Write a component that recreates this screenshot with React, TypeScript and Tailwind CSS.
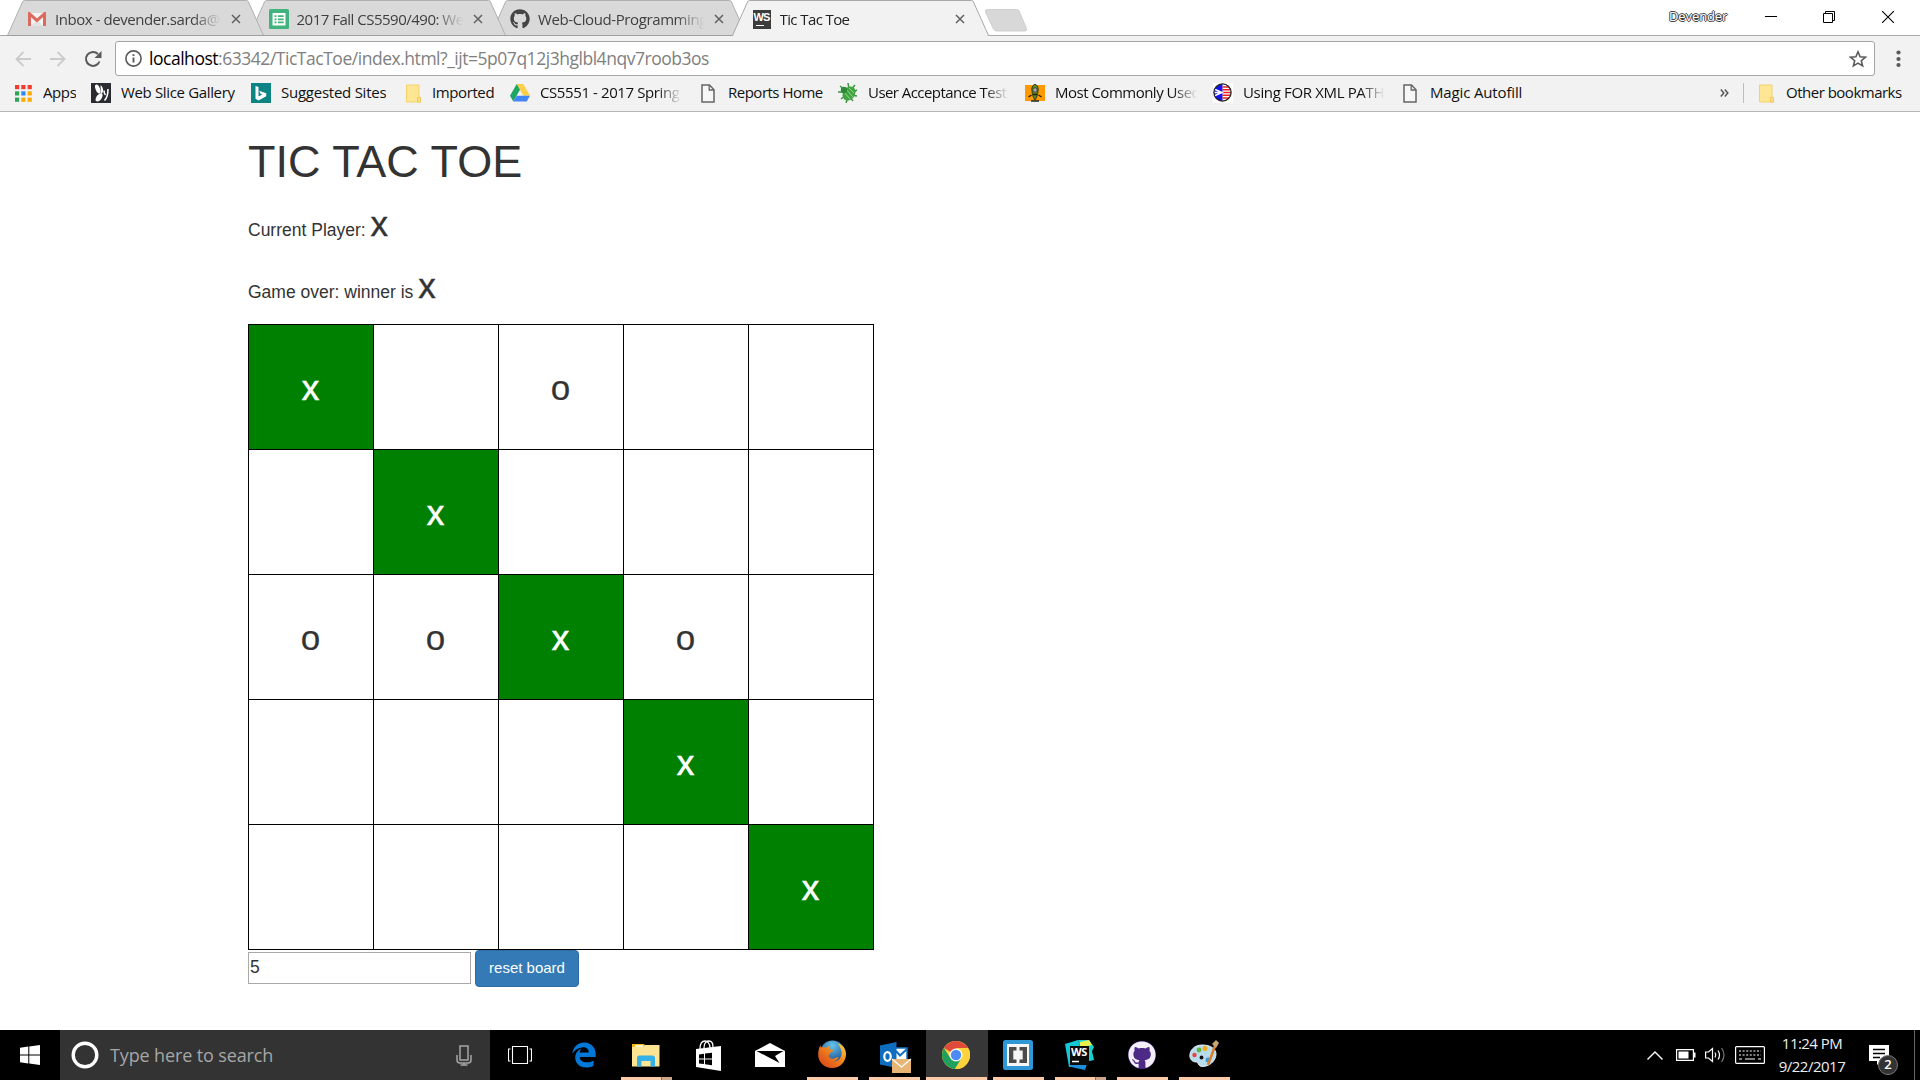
import React from "react";
import { FaGithub, FaEdgeLegacy } from "react-icons/fa6";

const fade = "[mask-image:linear-gradient(to_right,black_82%,transparent_99%)]";

/* ---------- browser icons ---------- */

const GmailIcon = () => (
  <svg width="18" height="14" viewBox="0 0 18 14">
    <rect x="1" y="1" width="16" height="13" fill="#f3f3f3" />
    <path d="M3 14 9 8l6 6z" fill="#e2e2e2" />
    <path d="M1.500 14V1.800L9 8.400l7.500-6.600V14" fill="none" stroke="#dd6a5f" strokeWidth="3" />
  </svg>
);

const SheetsIcon = () => (
  <svg width="20" height="20" viewBox="0 0 20 20">
    <rect width="20" height="20" rx="1.500" fill="#42b37e" />
    <rect x="3.500" y="4" width="13" height="12.500" fill="#fff" />
    <path d="M5.500 6.300h2v1.800h-2zM9 6.300h5.700v1.800H9zM5.500 9.400h2v1.800h-2zM9 9.400h5.700v1.800H9zM5.500 12.500h2v1.800h-2zM9 12.500h5.700v1.800H9z" fill="#42b37e" />
  </svg>
);

const WsIcon = () => (
  <span className="flex h-[19px] w-[18px] flex-col bg-[#3c3c3c] pl-px">
    <span className="h-[15px] font-['Liberation_Sans'] text-[11px] leading-[14px] font-bold tracking-[-1px] text-white">WS</span>
    <span className="ml-[2px] h-[1.5px] w-[8px] bg-white" />
  </span>
);

const appDots = ["#f23a2f", "#f23a2f", "#f23a2f", "#2fa35a", "#2f86ee", "#fbab00", "#2fa35a", "#fbab00", "#fbab00"];

const AppsIcon = () => (
  <svg width="17" height="17" viewBox="0 0 17 17">
    {appDots.map((c, i) => (
      <rect key={i} x={(i % 3) * 6.3} y={Math.floor(i / 3) * 6.3} width="4.2" height="4.2" fill={c} />
    ))}
  </svg>
);

const SliceIcon = () => (
  <svg width="20" height="20" viewBox="0 0 20 20">
    <rect width="20" height="20" fill="#2b2c31" />
    <ellipse cx="6.800" cy="6" rx="2.200" ry="4.800" fill="#fff" transform="rotate(-22 6.800 6)" />
    <path d="M9.500 2q3 2 2.500 7l-2 2z" fill="#fff" />
    <path d="M4.500 17.500c0-3 1.500-6 5.500-7.500 2 .5 2 3 .5 5.500s-4 4-6 2z" fill="#fff" />
    <path d="M13 7.500q0 3 1.500 4.500M17 6c0 4.500-1 9-3.500 11.500" stroke="#fff" strokeWidth="1.600" fill="none" />
  </svg>
);

const BingIcon = () => (
  <svg width="20" height="20" viewBox="0 0 20 20">
    <rect width="20" height="20" fill="#0c8484" />
    <path d="M4.500 3l3 1v9.500l3.600-2-1.800-.9-1.100-2.800 7 2.400v3L7.500 17.500l-3-1.700z" fill="#fff" />
  </svg>
);

const FolderIcon = () => (
  <svg width="17" height="19" viewBox="0 0 17 19">
    <path d="M1.500 1h12.500v12l1.500 1v4H1.500z" fill="#ffe695" stroke="#f4d26a" />
    <path d="M12.500 13.500h3V18h-3z" fill="#ffe08a" stroke="#efc44e" strokeWidth=".8" />
  </svg>
);

const DriveIcon = () => (
  <svg width="20" height="18" viewBox="0 0 20 18">
    <path d="M6.700 0h6.600L20 11.700h-6.700z" fill="#ffcf47" />
    <path d="M6.700 0 10 5.800 3.300 17.500 0 11.700z" fill="#1fa463" />
    <path d="M6.700 11.700H20l-3.300 5.800H3.300z" fill="#4285f4" />
  </svg>
);

const PageIcon = () => (
  <svg width="14" height="19" viewBox="0 0 14 19">
    <path d="M1 1h7.500L13 5.800V18H1z" fill="#f7f7f7" stroke="#666" strokeWidth="1.500" />
    <path d="M8.200 1v5H13" fill="none" stroke="#666" strokeWidth="1.300" />
  </svg>
);

const BugIcon = () => (
  <svg width="20" height="20" viewBox="0 0 20 20">
    <path d="M2 3l5 4M10 0l1 6M17 2l-4 5M0 9h6M19 7l-6 3M3 16l5-4M8 20l2-6M19 13l-6-1M15 18l-4-5" stroke="#3f9442" strokeWidth="1.500" />
    <ellipse cx="11" cy="10.500" rx="6" ry="7.500" fill="#41a344" transform="rotate(35 11 10.500)" />
    <path d="M8 6l7 8M6 9l6 7M11 5l5 5" stroke="#8fd67f" strokeWidth="1" />
    <circle cx="6" cy="7" r="3.200" fill="#2f8a37" />
  </svg>
);

const PeaIcon = () => (
  <svg width="20" height="18" viewBox="0 0 20 18">
    <rect y="1" width="20" height="16" fill="#ff9900" />
    <path d="M10 0c2.500 1.500 3.800 4 3 7-.3 3.500-1 6-3 9-2-3-2.700-5.500-3-9-.8-3 .5-5.500 3-7z" fill="#5a8c22" stroke="#2b3a10" />
    <circle cx="10" cy="6" r="2.200" fill="#aaa" stroke="#333" strokeWidth=".8" />
    <path d="M8 10.500h4M3.500 13l3-2M16.500 13l-3-2M6 17h8" stroke="#222" strokeWidth="1.400" />
  </svg>
);

const FlagIcon = () => (
  <svg width="20" height="20" viewBox="0 0 20 20">
    <rect width="20" height="20" fill="#fff" />
    <circle cx="9.500" cy="9.500" r="8.600" fill="#fff" />
    <path d="M9.500.9a8.600 8.600 0 0 0 0 17.200z" fill="#1414f0" />
    <path d="M9.500 4h6.500M9.500 6.800h8M9.500 9.500h8.500M9.500 12.200h8M9.500 15h6.500" stroke="#f02020" strokeWidth="1.500" />
    <path d="M1 6l8 3.500L1 13M1 9.500h8" stroke="#fff" strokeWidth="1.500" fill="none" />
    <circle cx="9.500" cy="9.500" r="8.600" fill="none" stroke="#222" strokeWidth="1.300" />
  </svg>
);

/* ---------- tab strip ---------- */

type TabProps = { title: string; icon: React.ReactNode; active?: boolean; z: string; spacing: string };

const Tab = ({ title, icon, active, z, spacing }: TabProps) => (
  <div className={`relative -mr-[15.5px] flex h-[36px] w-[257px] shrink-0 items-center ${z}`}>
    <svg className="absolute inset-0" width="257" height="36" viewBox="0 0 257 36">
      <path d="M.5 35.500 15.500 2q.6-1.500 2-1.500h222q1.500 0 2 1.500l15 33.500" fill={active ? "#f2f2f2" : "#d9d9d9"} stroke={active ? "#a8a8a8" : "#b0b0b0"} />
      {!active && <path d="M0 35.500h257" stroke="#a0a0a0" />}
      {active && <path d="M1.500 35.500h254" stroke="#f2f2f2" />}
    </svg>
    <div className="relative flex h-full items-center pt-[2px]">
      <span className="ml-[20px] flex w-[20px] justify-center">{icon}</span>
      <span className={`ml-[8px] overflow-hidden whitespace-nowrap text-[15px] leading-[22px] ${active ? "w-[167px] text-[#222]" : "w-[168px] text-[#3f3f3f]"} ${spacing} ${fade}`}>{title}</span>
      <svg className="ml-[8px]" width="10" height="10" viewBox="0 0 10 10">
        <path d="M1 1l8 8M9 1l-8 8" stroke="#606060" strokeWidth="1.500" />
      </svg>
    </div>
  </div>
);

const TabStrip = () => (
  <div className="relative flex h-[36px] bg-white pl-[7px] shadow-[inset_0_-1px_0_#a8a8a8]">
    <Tab z="z-[3]" title="Inbox - devender.sarda@" icon={<GmailIcon />} spacing="tracking-[-0.45px]" />
    <Tab z="z-[2]" title="2017 Fall CS5590/490: We" icon={<SheetsIcon />} spacing="tracking-[-0.5px]" />
    <Tab z="z-[1]" title="Web-Cloud-Programming" icon={<FaGithub size={20} color="#444" />} spacing="tracking-[-0.4px]" />
    <Tab z="z-[4]" active title="Tic Tac Toe" icon={<WsIcon />} spacing="tracking-[-0.6px]" />
    <svg className="mt-[8px] ml-[11px]" width="44" height="25" viewBox="0 0 44 25">
      <path d="M3.500 1.500h29q2 0 2.700 1.500l7.300 17.500q.7 2.500-1.500 2.500H13q-2.500 0-3.500-2L1.500 4q-.7-2.500 2-2.500z" fill="#d8d8d8" stroke="#cfcfcf" />
    </svg>
    <div className="ml-auto flex h-[35px] items-start pr-[26px]">
      <span className="mt-[7px] mr-[37px] w-[59px] text-[13px] leading-[18px] tracking-[-0.1px] text-white [text-shadow:-1px_0_#444,1px_0_#444,0_-1px_#444,0_1px_#444]">Devender</span>
      <svg className="mt-[16px]" width="12" height="1"><rect width="12" height="1" fill="#000" /></svg>
      <svg className="mt-[11px] ml-[46px]" width="12" height="12" viewBox="0 0 12 12" fill="none" stroke="#000">
        <path d="M.5 2.500h9v9h-9zM2.500 2.500v-2h9v9h-2" />
      </svg>
      <svg className="mt-[11px] ml-[47px]" width="12" height="12" viewBox="0 0 12 12" stroke="#000" strokeWidth="1.100">
        <path d="M0 0l12 12M12 0L0 12" />
      </svg>
    </div>
  </div>
);

/* ---------- toolbar and bookmarks ---------- */

const Toolbar = () => (
  <div className="flex h-[40px] items-start bg-[#f2f2f2] pt-[5px]">
    <div className="flex h-[36px] w-[115px] items-center pl-[15px]">
      <svg width="16" height="16" viewBox="0 0 16 16" fill="none" stroke="#cbcbcb" strokeWidth="1.800"><path d="M16 8H1.500M8.500 1 1.500 8l7 7" /></svg>
      <svg className="ml-[19px]" width="16" height="16" viewBox="0 0 16 16" fill="none" stroke="#cbcbcb" strokeWidth="1.800"><path d="M0 8h14.500M7.500 1l7 7-7 7" /></svg>
      <svg className="ml-[18px]" width="18" height="18" viewBox="0 0 18 18" fill="none">
        <path d="M15.500 11.500A7 7 0 1 1 14 4" stroke="#5a5a5a" strokeWidth="2" />
        <path d="M17.500 1v7h-7z" fill="#5a5a5a" />
      </svg>
    </div>
    <div className="flex h-[35px] w-[1760px] items-center rounded-[3px] border border-[#a6a6a6] bg-white">
      <svg className="ml-[9px]" width="17" height="17" viewBox="0 0 17 17">
        <circle cx="8.500" cy="8.500" r="7.600" fill="none" stroke="#5a5a5a" strokeWidth="1.600" />
        <path d="M8.500 7.500v5M8.500 4.200v1.900" stroke="#5a5a5a" strokeWidth="1.900" />
      </svg>
      <span className="mb-[2px] ml-[7px] whitespace-nowrap text-[17.5px] leading-[26px] tracking-[-0.47px] text-[#808080]">
        <span className="text-black">localhost</span>:63342/TicTacToe/index.html?_ijt=5p07q12j3hglbl4nqv7roob3os
      </span>
      <svg className="mr-[7px] ml-auto" width="18" height="18" viewBox="0 0 18 18" fill="none" stroke="#5a5a5a" strokeWidth="1.600">
        <path d="M9 1.800l2.100 5 5.300.4-4.100 3.500 1.300 5.200L9 13.100l-4.600 2.800 1.300-5.200L1.600 7.200l5.300-.4z" />
      </svg>
    </div>
    <svg className="mt-[9px] ml-[21px]" width="5" height="18" viewBox="0 0 5 18" fill="#5a5a5a">
      <circle cx="2.500" cy="2.500" r="2.100" /><circle cx="2.500" cy="9" r="2.100" /><circle cx="2.500" cy="15" r="2.100" />
    </svg>
  </div>
);

type Bookmark = { icon: React.ReactNode; text: string; slot: string; label: string; clip?: boolean };

const bookmarks: Bookmark[] = [
  { icon: <AppsIcon />, text: "Apps", slot: "w-[78px]", label: "ml-[10px] tracking-[-0.4px]" },
  { icon: <SliceIcon />, text: "Web Slice Gallery", slot: "w-[160px]", label: "ml-[10px] tracking-[-0.35px]" },
  { icon: <BingIcon />, text: "Suggested Sites", slot: "w-[152px]", label: "ml-[10px] tracking-[-0.25px]" },
  { icon: <FolderIcon />, text: "Imported", slot: "w-[107px]", label: "ml-[9px] tracking-[-0.4px]" },
  { icon: <DriveIcon />, text: "CS5551 - 2017 Spring", slot: "w-[188px]", label: "ml-[10px] w-[143px] tracking-[-0.4px]", clip: true },
  { icon: <PageIcon />, text: "Reports Home", slot: "w-[140px]", label: "ml-[10px] tracking-[-0.5px]" },
  { icon: <BugIcon />, text: "User Acceptance Testi", slot: "w-[187px]", label: "ml-[10px] w-[142px] tracking-[-0.55px]", clip: true },
  { icon: <PeaIcon />, text: "Most Commonly Used", slot: "w-[188px]", label: "ml-[10px] w-[144px] tracking-[-0.5px]", clip: true },
  { icon: <FlagIcon />, text: "Using FOR XML PATH", slot: "w-[187px]", label: "ml-[10px] w-[143px] tracking-[-0.35px]", clip: true },
  { icon: <PageIcon />, text: "Magic Autofill", slot: "w-[130px]", label: "ml-[10px] tracking-[-0.15px]" },
];

const BookmarkBar = () => (
  <div className="flex h-[36px] items-center border-b border-[#b6b6b6] bg-[#f2f2f2] pb-px pl-[13px] text-[15px] leading-[22px] text-[#111]">
    {bookmarks.map((b) => (
      <div key={b.text} className={`flex shrink-0 items-center ${b.slot}`}>
        <span className="flex w-[20px] shrink-0 justify-center">{b.icon}</span>
        <span className={`mb-[2px] overflow-hidden whitespace-nowrap ${b.label} ${b.clip ? fade : ""}`}>{b.text}</span>
      </div>
    ))}
    <svg className="ml-auto" width="9" height="8" viewBox="0 0 9 8" fill="none" stroke="#555" strokeWidth="1.500">
      <path d="M.8.5 3.800 4l-3 3.500M4.800.5 7.800 4l-3 3.500" />
    </svg>
    <span className="ml-[14px] h-[20px] w-px bg-[#bdbdbd]" />
    <span className="ml-[14px] flex"><FolderIcon /></span>
    <span className="mb-[2px] ml-[11px] w-[134px] whitespace-nowrap tracking-[-0.5px]">Other bookmarks</span>
  </div>
);

/* ---------- game page ---------- */

const board = ["x.o..", ".x...", "ooxo.", "...x.", "....x"];

const Game = () => (
  <main className="flex h-[918px] flex-col bg-white pl-[248px] font-['Liberation_Sans',sans-serif] text-[17.5px] text-[#333]">
    <h1 className="mt-[25px] h-[50px] text-[45px] leading-[50px]">TIC TAC TOE</h1>
    <p className="mt-[25px] h-[36px] leading-[36px]">Current Player: <span className="text-[35px] leading-[0] [-webkit-text-stroke:0.4px_#333]">x</span></p>
    <p className="mt-[26px] h-[36px] leading-[36px]">Game over: winner is <span className="text-[35px] leading-[0] [-webkit-text-stroke:0.4px_#333]">x</span></p>
    <div className="mt-[14px] grid w-[626px] grid-cols-[repeat(5,125px)] border-t border-l border-black">
      {board.flatMap((row, r) =>
        row.split("").map((m, c) => (
          <div key={`${r}${c}`} className={`flex h-[125px] items-center justify-center border-r border-b border-black pt-[2px] pr-px text-[35px] leading-[40px] ${m === "x" ? "bg-[#008000] text-white [-webkit-text-stroke:0.6px_white]" : "[-webkit-text-stroke:0.2px_#333]"}`}>
            {m === "." ? "" : m}
          </div>
        ))
      )}
    </div>
    <div className="flex">
      <div className="mt-[2px] flex h-[32px] w-[223px] items-center border border-[#a9a9a9] pb-px pl-px">5</div>
      <div className="ml-[4px] flex h-[37px] w-[104px] items-center justify-center rounded-[4px] border border-[#2e6da4] bg-[#337ab7] text-[15px] text-white">reset board</div>
    </div>
  </main>
);

/* ---------- taskbar ---------- */

const ExplorerIcon = () => (
  <svg width="28" height="24" viewBox="0 0 28 24">
    <path d="M0 1h12l2 2.500V8H0z" fill="#f5b915" />
    <path d="M3 2h8v2H3z" fill="#fff3cf" />
    <path d="M0 4h11l2-2h14.500v21.500H0z" fill="#ffe593" />
    <path d="M5 23.500V15q0-2.500 2.500-2.500h13Q23 12.500 23 15v8.500h-4.500V18h-9v5.500z" fill="#35b1e8" />
  </svg>
);

const StoreIcon = () => (
  <svg width="27" height="31" viewBox="0 0 27 31">
    <path d="M5 9C5 2 8 1 10 1s5 2 5 7M9 8c0-6 3-7 5-7s4 2 4 6" fill="none" stroke="#fff" strokeWidth="1.300" />
    <path d="M1 9 26 6v25L1 27z" fill="#fff" />
    <path d="M4 14.500l5-.7v4.700H4zM10 13.600l7-.9v5.800h-7zM4 19.600h5v4.500l-5-.6zM10 19.600h7v5.600l-7-.9z" fill="#000" />
  </svg>
);

const MailIcon = () => (
  <svg width="30" height="24" viewBox="0 0 30 24">
    <path d="M0 8 15 0l15 8v16H0z" fill="#fff" />
    <path d="M1.500 8h27L20 13l4.500 7L15 15z" fill="#000" />
  </svg>
);

const FirefoxIcon = () => (
  <svg width="28" height="28" viewBox="0 0 28 28">
    <defs>
      <radialGradient id="ffBlue" cx=".5" cy=".2" r=".8"><stop offset="0" stopColor="#63c5ee" /><stop offset="1" stopColor="#123a80" /></radialGradient>
      <linearGradient id="ffFox" x1="0" y1="1" x2="1" y2="0"><stop offset="0" stopColor="#d8381c" /><stop offset=".6" stopColor="#f08a1e" /><stop offset="1" stopColor="#fcd846" /></linearGradient>
    </defs>
    <circle cx="14.500" cy="13" r="12.500" fill="url(#ffBlue)" />
    <path d="M2.500 5c0 2 .5 2.500.5 2.500 2-.8 4-.7 5.500.2C10 6 12 5.800 12.500 6c-.7 1.200-1.200 2-.7 3 1 .8 3 .5 3.500 1-.2 1.700-2 2-3.200 3 .2 1.500-1 2-1.600 2.500.3 2.500 3.200 3.700 5.500 3 2-.6 3-1.500 4.500-1-1 3-5 4-6 4 6 .5 9.500-4 9-9.500-.3-3-1.800-6-4-8.500C24.500 4.500 28 8.500 28 14c0 8-6 14-13.700 14C6 28 0 22 .2 14.500.3 10.500 1 7.500 2.500 5z" fill="url(#ffFox)" />
  </svg>
);

const OutlookIcon = () => (
  <svg width="32" height="31" viewBox="0 0 32 31">
    <path d="M15 6h12v13H15z" fill="#fff" stroke="#1271c4" strokeWidth="1.500" />
    <path d="M16 9l4 4.500L27 7" fill="none" stroke="#1271c4" strokeWidth="2" />
    <path d="M0 3.500 16.500 0v26L0 22.500z" fill="#0f6dbf" />
    <ellipse cx="7.500" cy="14.500" rx="3.200" ry="4.300" fill="none" stroke="#fff" strokeWidth="2.200" />
    <path d="M12 17h19v14H12z" fill="#e9b574" />
    <path d="M12 17l9.500 8 9.500-8" fill="none" stroke="#fff" strokeWidth="1.200" />
  </svg>
);

const ChromeIcon = () => (
  <svg width="28" height="28" viewBox="0 0 28 28">
    <circle cx="14" cy="14" r="14" fill="#fdd23c" />
    <path d="M14 14 1.900 7A14 14 0 0 1 26.100 7z" fill="#e04a3b" />
    <path d="M14 14 8.500 17.200 1.900 7A14 14 0 0 0 13 28l6.500-11z" fill="#1fa05c" />
    <path d="M14 7h12.100A14 14 0 0 1 13 28l7-11z" fill="#fdd23c" />
    <circle cx="14" cy="14" r="6.500" fill="#fff" />
    <circle cx="14" cy="14" r="5.200" fill="#4b8bf5" />
  </svg>
);

const BracketsIcon = () => (
  <svg width="30" height="30" viewBox="0 0 30 30">
    <rect width="30" height="30" rx="2.500" fill="#2f97d6" />
    <rect x="4" y="4" width="22" height="22" fill="#f6f6f6" />
    <path d="M6 7h7.500v3.500h-3.200v9h3.200V23H6zM24 7h-7.500v3.500h3.200v9h-3.200V23H24z" fill="#4b4b4b" />
  </svg>
);

const WebStormIcon = () => (
  <span className="relative flex">
    <svg width="30" height="30" viewBox="0 0 30 30">
      <path d="M0 4 13 0l4 12-4 14-9 1z" fill="#15c8d8" />
      <path d="M13 0h11l5 7-2 4 2 9-9 2z" fill="#18cfd0" />
      <path d="M15 2 24 0l3 5-12 3z" fill="#e8f04c" />
      <path d="M4 24h18l-2 6-14-3z" fill="#1a8fe0" />
      <path d="M5 6h19v19H5z" fill="#0b0b0b" />
      <path d="M7 21.500h7" stroke="#fff" strokeWidth="1.500" />
    </svg>
    <span className="absolute top-[6px] left-[6px] font-['Open_Sans'] text-[11px] leading-[12px] font-bold tracking-[-0.5px] text-white">WS</span>
  </span>
);

const PaintIcon = () => (
  <svg width="30" height="28" viewBox="0 0 30 28">
    <path d="M13 5C5 5 0 11 1 17c.7 4 4 5 6.500 5 2 0 1.500 4 5 4.500C20 27 27 21 27 14c0-5-5-9-14-9z" fill="#b9dced" stroke="#e2f2fa" />
    <circle cx="5.500" cy="15" r="2.200" fill="#e2463c" /><circle cx="10" cy="10" r="2.400" fill="#5fb343" /><circle cx="16" cy="8.500" r="2.500" fill="#f3ab1c" />
    <circle cx="12.500" cy="17.500" r="1.900" fill="#111" /><circle cx="19" cy="20" r="2.500" fill="#3c9bd8" />
    <path d="M19 25 26 6" stroke="#d97f2b" strokeWidth="2.500" />
    <path d="M23 4l4-4 3 3-3 5z" fill="#c9a576" />
  </svg>
);

type Task = { icon: React.ReactNode; pos: string; line?: boolean; split?: boolean; active?: boolean };

const tasks: Task[] = [
  {
    pos: "-translate-x-[3px]",
    icon: (
      <svg width="24" height="18" viewBox="0 0 24 18" fill="none" stroke="#fff" strokeWidth="1.100">
        <path d="M4.500.5h15v17h-15zM2.500 3h-2v12h2M21.500 3h2v12h-2" />
      </svg>
    ),
  },
  { pos: "-translate-x-px", icon: <FaEdgeLegacy size={26} color="#0078d7" /> },
  { pos: "-translate-x-px", icon: <ExplorerIcon />, line: true, split: true },
  { pos: "-translate-x-px", icon: <StoreIcon /> },
  { pos: "-translate-x-px", icon: <MailIcon /> },
  { pos: "-translate-x-px -translate-y-px", icon: <FirefoxIcon />, line: true },
  { pos: "translate-x-px translate-y-[2px]", icon: <OutlookIcon />, line: true },
  { pos: "-translate-x-px", icon: <ChromeIcon />, line: true, active: true },
  { pos: "-translate-x-px", icon: <BracketsIcon />, line: true },
  { pos: "-translate-x-px", icon: <WebStormIcon />, line: true, split: true },
  { pos: "-translate-x-px", icon: <span className="flex rounded-full bg-[#4c2a85]"><FaGithub size={28} color="#f3eef8" /></span>, line: true },
  { pos: "-translate-x-px -translate-y-px", icon: <PaintIcon />, line: true },
];

const Taskbar = () => (
  <footer className="flex h-[50px] bg-black text-white">
    <div className="flex w-[60px] items-center justify-center">
      <svg width="20" height="20" viewBox="0 0 20 20" fill="#fff">
        <path d="M0 2.800 8.300 1.600V9.500H0zM9.300 1.500 20 0v9.500H9.300zM0 10.500h8.300v7.900L0 17.200zM9.300 10.500H20V20L9.300 18.500z" />
      </svg>
    </div>
    <div className="flex w-[430px] items-center bg-[#333]">
      <svg className="ml-[11px]" width="28" height="28" viewBox="0 0 28 28"><circle cx="14" cy="14" r="11.800" fill="none" stroke="#fff" strokeWidth="3.400" /></svg>
      <span className="ml-[11px] text-[18px] leading-[26px] tracking-[-0.13px] whitespace-nowrap text-[#a6a6a6]">Type here to search</span>
      <svg className="mr-[18px] ml-auto" width="16" height="21" viewBox="0 0 16 21" fill="none" stroke="#a6a6a6" strokeWidth="1.500">
        <path d="M4 1h8v14H4zM1 10v5q0 3 3 3h8q3 0 3-3v-5M8 18v2M4.500 20h7" />
      </svg>
    </div>
    <div className="ml-[2px] flex">
      {tasks.map((t, i) => (
        <div key={i} className={`relative flex h-[50px] w-[62px] items-center justify-center ${t.active ? "bg-[#373737]" : ""}`}>
          <span className={`flex ${t.pos}`}>{t.icon}</span>
          {t.line && (
            <span className={`absolute bottom-0 flex h-[3px] bg-[#fdcaa8] ${t.active ? "left-0 w-[61px]" : "left-[5px] w-[51px]"}`}>
              {t.split && <span className="ml-auto h-full w-[11px] border-l border-[#8f705c] bg-[#cba58c]" />}
            </span>
          )}
        </div>
      ))}
    </div>
    <div className="ml-auto flex items-center">
      <svg width="16" height="9" viewBox="0 0 16 9" fill="none" stroke="#fff" strokeWidth="1.400"><path d="M.5 8.500 8 1l7.500 7.500" /></svg>
      <svg className="ml-[13px]" width="20" height="12" viewBox="0 0 20 12"><path d="M.6.6h16.800v10.800H.6z" fill="none" stroke="#fff" strokeWidth="1.200" /><path d="M2.500 2.500h10v7h-10zM18 3.500h1.500v5H18z" fill="#fff" /></svg>
      <svg className="ml-[9px]" width="21" height="16" viewBox="0 0 21 16" fill="none" stroke="#fff" strokeWidth="1.200">
        <path d="M.6 5h2.900L7.500 1.500v13L3.500 11H.6zM10 5.500q1.500 2.500 0 5M13 3.500q3 4.500 0 9" /><path d="M16.500 1q5 7 0 14" stroke="#777" />
      </svg>
      <svg className="ml-[9px]" width="30" height="18" viewBox="0 0 30 18" fill="none" stroke="#fff" strokeWidth="1.200">
        <rect x=".6" y=".6" width="28.800" height="16.800" rx="1" />
        <path d="M4 5h22M4 9h22" strokeDasharray="2 1.600" /><path d="M4 13h3M10 13h10M23 13h3" />
      </svg>
      <div className="mr-px ml-[11px] flex w-[72px] flex-col items-center text-[15px] leading-[23px] whitespace-nowrap text-[#eee]">
        <span className="tracking-[-0.55px]">11:24 PM</span>
        <span className="tracking-[-0.5px]">9/22/2017</span>
      </div>
      <div className="relative ml-[20px] h-[20px] w-[20px]">
        <svg width="20" height="21" viewBox="0 0 20 21"><path d="M0 0h20v16h-8l-4 4v-4H0z" fill="#fff" /><path d="M4 4.500h12M4 8.500h12M4 12.500h7" stroke="#000" strokeWidth="1.300" /></svg>
        <span className="absolute top-[10px] left-[9px] flex h-[20px] w-[20px] items-center justify-center rounded-full border border-[#777] bg-[#333] text-[13px] font-semibold">2</span>
      </div>
      <span className="ml-[25px] h-[50px] w-px bg-[#666]" />
      <span className="w-[5px]" />
    </div>
  </footer>
);

export default function App() {
  return (
    <div className="h-[1080px] w-[1920px] overflow-hidden bg-white font-['Open_Sans','Noto_Sans',sans-serif]">
      <TabStrip />
      <Toolbar />
      <BookmarkBar />
      <Game />
      <Taskbar />
    </div>
  );
}
